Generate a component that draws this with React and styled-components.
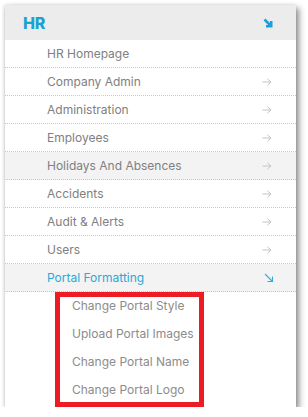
import React from "react";
import styled, { createGlobalStyle } from "styled-components";

const Global = createGlobalStyle`
  body {
    margin: 0;
    background: #fff;
    font-family: Inter, "Noto Sans", sans-serif;
  }
`;

const Card = styled.div`
  margin: 5px 0 0 5px;
  width: 291px;
  height: 402px;
  background: #fff;
  box-shadow: 3px 3px 6px rgba(0, 0, 0, 0.45), -1px 0 3px rgba(0, 0, 0, 0.12);
  overflow: hidden;
`;

const Header = styled.div`
  height: 35px;
  background: #ececec;
  display: flex;
  align-items: center;
  justify-content: space-between;
  padding: 0 23px 0 18px;
`;

const Title = styled.span`
  font-size: 16px;
  font-weight: 800;
  color: #1ba2d3;
  letter-spacing: -0.3px;
`;

const Row = styled.div`
  height: 27px;
  display: flex;
  align-items: center;
  justify-content: space-between;
  padding: 0 ${(p) => (p.$active ? "22px" : "24px")} 0 42px;
  border-bottom: 1px dotted #c8c8c8;
  background: ${(p) => (p.$shaded ? "#f3f3f3" : "#fff")};
  color: ${(p) => (p.$active ? "#2aa8d8" : "#808080")};
  font-size: 12px;
`;

const SubBox = styled.div`
  margin-left: 50px;
  width: 149px;
  border: 5px solid #ed1c24;
  box-sizing: border-box;
`;

const SubItem = styled.div`
  padding: 0 0 10px 12px;
  line-height: 18px;
  font-size: 12px;
  color: #8c8c8c;
  &:last-child {
    padding-bottom: 3px;
  }
`;

const Arrow = () => (
  <svg width="10" height="8" viewBox="0 0 10 8">
    <path d="M0.5 4H9M5.5 0.8L9 4L5.5 7.2" stroke="#c4c4c4" strokeWidth="1" fill="none" />
  </svg>
);

const DiagArrow = ({ bold }) => (
  <svg width="10" height="10" viewBox="0 0 10 10">
    <path
      d={bold ? "M1.5 1.5L8 8M3 8.2H8.2V3" : "M1 1L8.5 8.5M3.5 8.5H8.5V3.5"}
      stroke={bold ? "#1aa0d2" : "#35a9d8"}
      strokeWidth={bold ? 2.6 : 1.1}
      fill="none"
    />
  </svg>
);

const items = [
  { label: "HR Homepage", arrow: false },
  { label: "Company Admin", arrow: true },
  { label: "Administration", arrow: true },
  { label: "Employees", arrow: true },
  { label: "Holidays And Absences", arrow: true, shaded: true },
  { label: "Accidents", arrow: true },
  { label: "Audit & Alerts", arrow: true },
  { label: "Users", arrow: true },
];

const subs = ["Change Portal Style", "Upload Portal Images", "Change Portal Name", "Change Portal Logo"];

export default function App() {
  return (
    <>
      <Global />
      <Card>
        <Header>
          <Title>HR</Title>
          <DiagArrow bold />
        </Header>
        {items.map((it) => (
          <Row key={it.label} $shaded={it.shaded}>
            <span>{it.label}</span>
            {it.arrow && <Arrow />}
          </Row>
        ))}
        <Row $shaded $active>
          <span>Portal Formatting</span>
          <DiagArrow />
        </Row>
        <SubBox>
          {subs.map((s) => (
            <SubItem key={s}>{s}</SubItem>
          ))}
        </SubBox>
      </Card>
    </>
  );
}
